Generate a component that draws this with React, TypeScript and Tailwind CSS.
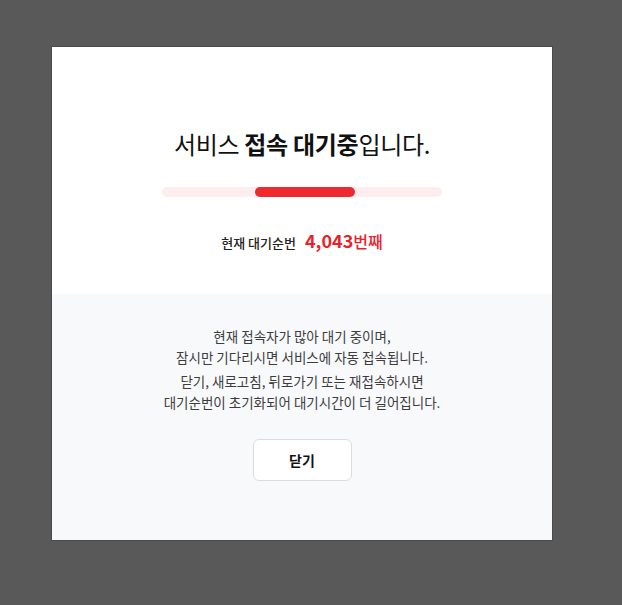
export default function App() {
  return (
    <div
      className="w-[622px] h-[605px] bg-[#595959] pl-[52px] pt-[47px]"
      style={{ fontFamily: '"Noto Sans CJK KR", "Noto Sans", sans-serif' }}
    >
      <div className="w-[500px] h-[493px] bg-white flex flex-col shadow-[0_0_0_1px_rgba(0,0,0,0.15)]">
        <div className="h-[247px] flex flex-col items-center pt-[81px]">
          <h1 className="text-[24px] leading-[32px] text-[#111] tracking-[-0.3px]">
            서비스 <b className="font-bold">접속 대기중</b>입니다.
          </h1>
          <div className="mt-[27px] w-[280px] h-[10px] rounded-full bg-[#fdedef] flex">
            <div className="ml-[93px] w-[100px] h-[10px] rounded-full bg-[#ee2a2f]" />
          </div>
          <div className="mt-[30px] flex items-baseline">
            <span className="text-[13px] font-medium text-[#222]">현재 대기순번</span>
            <span className="ml-[9px] text-[18px] font-bold text-[#e8212a]">4,043</span>
            <span className="text-[16px] font-medium text-[#e8212a]">번째</span>
          </div>
        </div>
        <div className="flex-1 bg-[#f8f9fb] flex flex-col items-center pt-[32px]">
          <p className="text-[13.5px] leading-[21px] text-[#3d3d3d] text-center">
            현재 접속자가 많아 대기 중이며,
            <br />
            잠시만 기다리시면 서비스에 자동 접속됩니다.
          </p>
          <p className="mt-[3px] text-[13.5px] leading-[21px] text-[#3d3d3d] text-center">
            닫기, 새로고침, 뒤로가기 또는 재접속하시면
            <br />
            대기순번이 초기화되어 대기시간이 더 길어집니다.
          </p>
          <button className="mt-[26px] w-[99px] h-[42px] bg-white border border-[#dcdcdc] rounded-[6px] text-[14px] font-bold text-[#111]">
            닫기
          </button>
        </div>
      </div>
    </div>
  );
}
